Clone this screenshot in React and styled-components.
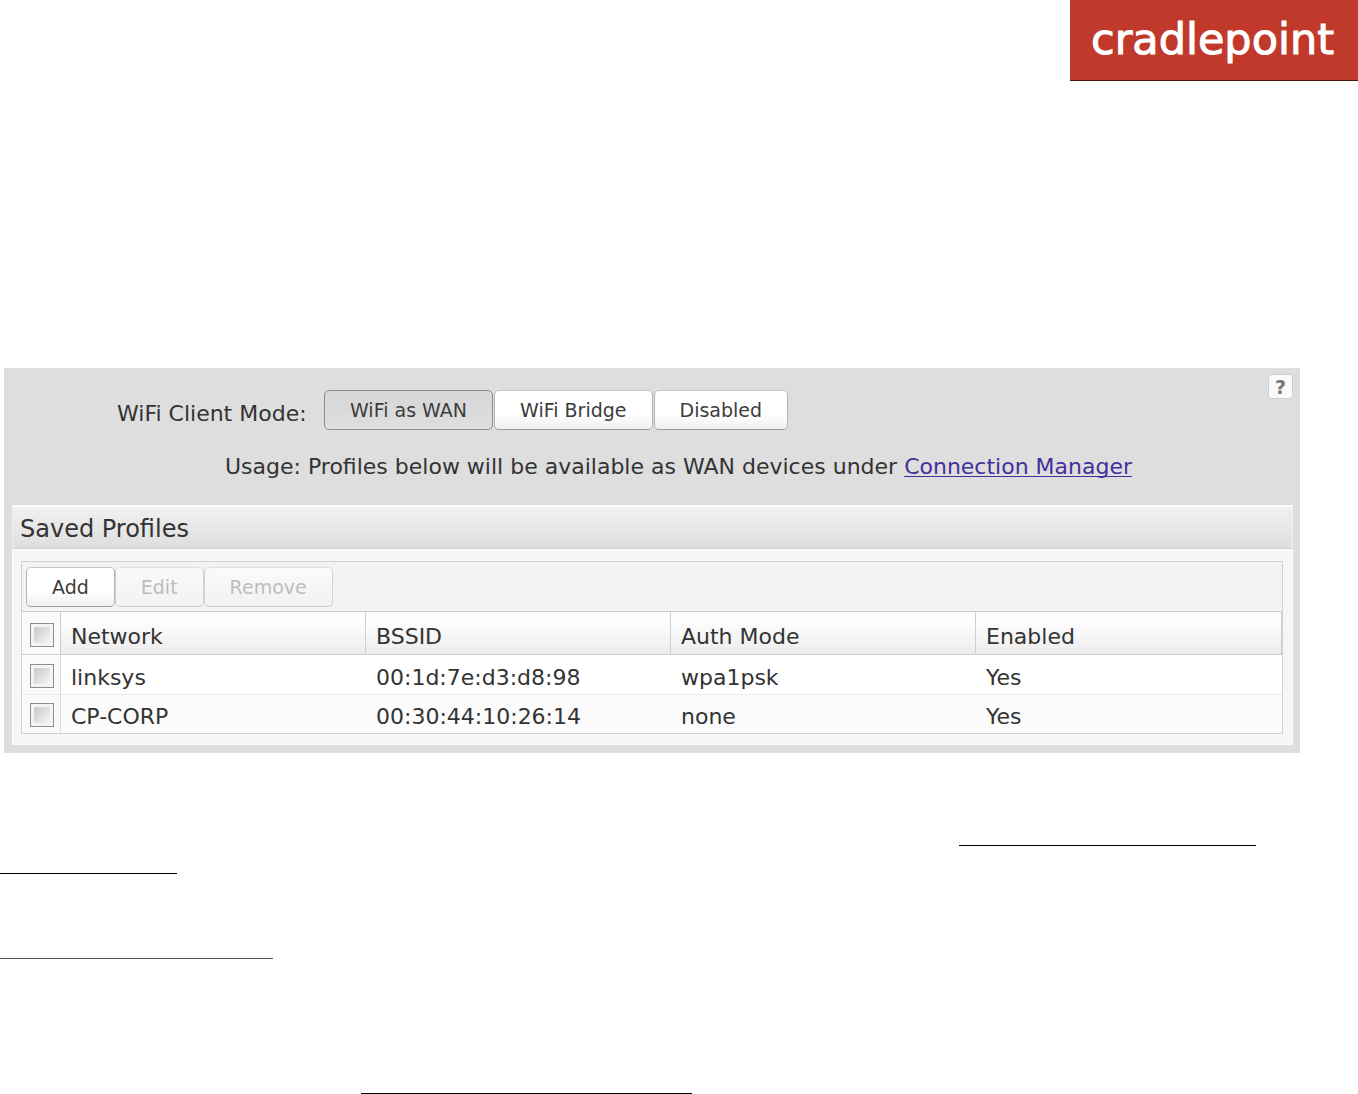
import React, { useState } from "react";
import styled, { createGlobalStyle } from "styled-components";

const GlobalStyle = createGlobalStyle`
  * {
    box-sizing: border-box;
  }

  body {
    margin: 0;
    background: #fff;
    color: #333;
    font-family: "DejaVu Sans", Verdana, sans-serif;
    font-size: 22px;
    line-height: 28px;
  }
`;

const Header = styled.header`
  display: flex;
  justify-content: flex-end;
`;

const Logo = styled.div`
  width: 288px;
  height: 81px;
  padding-left: 21px;
  background: #c0392b;
  border-bottom: 1px solid #4a1510;
  color: #fff;
  font-size: 43px;
  line-height: 78px;
  -webkit-text-stroke: 1px #fff;
`;

const Panel = styled.main`
  margin: 287px 58px 0 4px;
  padding: 6px 7px 8px 8px;
  background: #dedede;
`;

const TopRow = styled.div`
  display: flex;
  align-items: flex-start;
`;

const ModeGroup = styled.div`
  flex: 1;
  display: flex;
  gap: 1px;
  align-items: center;
  padding: 16px 0 0 105px;
`;

const ModeLabel = styled.span`
  width: 206px;
  padding-top: 8px;
`;

const Button = styled.button`
  height: 40px;
  padding: 0 25px;
  border: 1px solid;
  border-color: ${({ $pressed }) =>
    $pressed ? "#8e8e8e" : "#c6c6c6 #b4b4b4 #9c9c9c"};
  border-radius: 5px;
  background: ${({ $pressed }) =>
    $pressed
      ? "linear-gradient(#d6d6d6, #dfdfdf)"
      : "linear-gradient(#fff 60%, #f0f0f0)"};
  color: #3c3c3c;
  font-family: inherit;
  font-size: 19px;
  line-height: 24px;
  cursor: pointer;

  &:disabled {
    border-color: #dedede #d2d2d2 #c8c8c8;
    background: linear-gradient(#fafafa, #f2f2f2);
    color: #bdbdbd;
    cursor: default;
  }
`;

const HelpButton = styled.button`
  width: 25px;
  height: 25px;
  padding: 0;
  border: 1px solid #cfcfcf;
  border-radius: 3px;
  background: #fafafa;
  color: #777;
  font-family: inherit;
  font-size: 19px;
  font-weight: bold;
  line-height: 22px;
  cursor: pointer;
`;

const Usage = styled.p`
  margin: 0;
  padding: 23px 0 24px 213px;
`;

const Link = styled.a`
  color: #43309c;
  text-decoration: underline;
  text-decoration-thickness: 1px;
  text-decoration-skip-ink: none;
  text-underline-offset: 2px;
`;

const SectionTitle = styled.h2`
  margin: 0;
  height: 44px;
  padding-left: 7px;
  border: 1px solid #efefef;
  border-top: 2px solid #fafafa;
  border-bottom-color: #d2d2d2;
  background: linear-gradient(#f1f1f1, #dedede);
  font-size: 24px;
  font-weight: normal;
  line-height: 44px;
`;

const SectionBody = styled.section`
  padding: 10px 9px 10px 8px;
  border: 1px solid #fcfcfc;
  border-top-width: 2px;
  background: #f6f6f6;
`;

const Grid = styled.div`
  border: 1px solid #d2d2d2;
`;

const Toolbar = styled.div`
  display: flex;
  height: 50px;
  padding: 5px 4px;
  border-bottom: 1px solid #cecece;
  background: #f3f3f3;
`;

const Table = styled.table`
  width: 100%;
  border-collapse: separate;
  border-spacing: 0;
  table-layout: fixed;
  background: #fff;
`;

const CheckCol = styled.col`
  width: 39px;
`;

const DataCol = styled.col`
  width: 305px;
`;

const HeadCell = styled.th`
  height: 43px;
  padding: 7px 0 0 10px;
  border-right: 1px solid #cfcfcf;
  border-bottom: 1px solid #cfcfcf;
  background: linear-gradient(#fdfdfd 20%, #ededed);
  font-weight: normal;
  text-align: left;
`;

const Cell = styled.td`
  height: 39px;
  padding: 5px 0 0 10px;
  border-top: 1px solid ${({ $first }) => ($first ? "#fff" : "#ececec")};
  background: ${({ $first }) => ($first ? "#fff" : "#fbfbfb")};
`;

const CheckHead = styled(HeadCell)`
  padding: 4px 0 0 8px;
  background: #fafafa;
`;

const CheckCell = styled(Cell)`
  padding: 2px 0 0 8px;
  border-right: 1px solid #dcdcdc;
  background: #fafafa;
`;

const Checkbox = styled.input.attrs({ type: "checkbox" })`
  appearance: none;
  display: block;
  width: 24px;
  height: 24px;
  margin: 0;
  padding: 3px;
  border: 1px solid #8e8e8e;
  background:
    linear-gradient(135deg, #c8c8c8, #f6f6f6) content-box,
    #f4f4f4;
  cursor: pointer;

  &:checked {
    background: #777 content-box;
  }
`;

const Footer = styled.footer`
  display: flex;
  flex-direction: column;
  padding-top: 92px;
`;

const Rule = styled.div`
  width: ${({ $width }) => $width}px;
  height: 1px;
  margin: 0 0 ${({ $after }) => $after || 0}px ${({ $left }) => $left || 0}px;
  background: ${({ $color }) => $color || "#000"};
`;

const modes = ["WiFi as WAN", "WiFi Bridge", "Disabled"];

const profiles = [
  { network: "linksys", bssid: "00:1d:7e:d3:d8:98", auth: "wpa1psk", enabled: "Yes" },
  { network: "CP-CORP", bssid: "00:30:44:10:26:14", auth: "none", enabled: "Yes" },
];

const ProfileTable = () => {
  const [selected, setSelected] = useState([]);

  const toggle = (name) => {
    setSelected((prev) =>
      prev.includes(name) ? prev.filter((n) => n !== name) : [...prev, name]
    );
  };

  const allSelected = selected.length === profiles.length;

  return (
    <Grid>
      <Toolbar>
        <Button type="button">Add</Button>
        <Button type="button" disabled={selected.length !== 1}>
          Edit
        </Button>
        <Button type="button" disabled={!selected.length}>
          Remove
        </Button>
      </Toolbar>
      <Table>
        <colgroup>
          <CheckCol />
          <DataCol />
          <DataCol />
          <DataCol />
          <col />
        </colgroup>
        <thead>
          <tr>
            <CheckHead>
              <Checkbox
                aria-label="Select all"
                checked={allSelected}
                onChange={() =>
                  setSelected(allSelected ? [] : profiles.map((p) => p.network))
                }
              />
            </CheckHead>
            <HeadCell>Network</HeadCell>
            <HeadCell>BSSID</HeadCell>
            <HeadCell>Auth Mode</HeadCell>
            <HeadCell>Enabled</HeadCell>
          </tr>
        </thead>
        <tbody>
          {profiles.map((profile, index) => (
            <tr key={profile.network}>
              <CheckCell $first={index === 0}>
                <Checkbox
                  aria-label={profile.network}
                  checked={selected.includes(profile.network)}
                  onChange={() => toggle(profile.network)}
                />
              </CheckCell>
              <Cell $first={index === 0}>{profile.network}</Cell>
              <Cell $first={index === 0}>{profile.bssid}</Cell>
              <Cell $first={index === 0}>{profile.auth}</Cell>
              <Cell $first={index === 0}>{profile.enabled}</Cell>
            </tr>
          ))}
        </tbody>
      </Table>
    </Grid>
  );
};

const App = () => {
  const [mode, setMode] = useState(modes[0]);

  return (
    <>
      <GlobalStyle />
      <Header>
        <Logo>cradlepoint</Logo>
      </Header>
      <Panel>
        <TopRow>
          <ModeGroup role="group" aria-labelledby="mode-label">
            <ModeLabel id="mode-label">WiFi Client Mode:</ModeLabel>
            {modes.map((name) => (
              <Button
                key={name}
                type="button"
                $pressed={name === mode}
                aria-pressed={name === mode}
                onClick={() => setMode(name)}
              >
                {name}
              </Button>
            ))}
          </ModeGroup>
          <HelpButton type="button">?</HelpButton>
        </TopRow>
        <Usage>
          Usage: Profiles below will be available as WAN devices under{" "}
          <Link href="#connection-manager">Connection Manager</Link>
        </Usage>
        <SectionTitle>Saved Profiles</SectionTitle>
        <SectionBody>
          <ProfileTable />
        </SectionBody>
      </Panel>
      <Footer>
        <Rule $width={297} $left={959} $after={27} />
        <Rule $width={177} $after={84} />
        <Rule $width={273} $after={134} $color="#555" />
        <Rule $width={331} $left={361} />
      </Footer>
    </>
  );
};

export default App;
